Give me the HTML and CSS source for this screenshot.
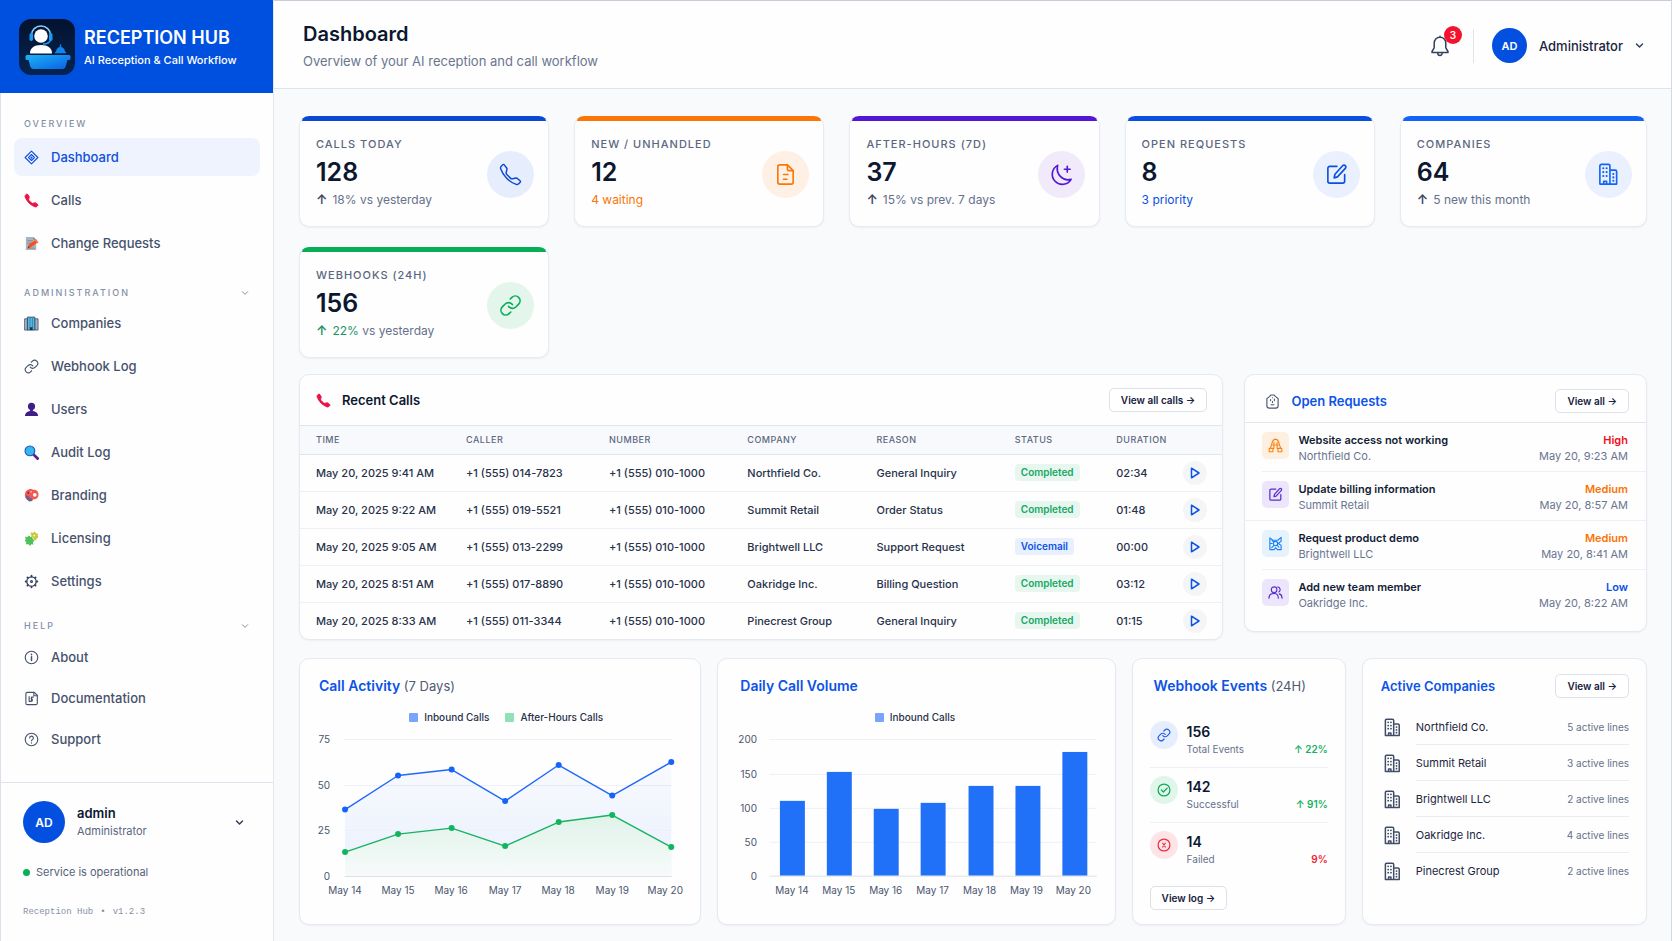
FILE: index.html
```html
<!DOCTYPE html>
<html lang="en">
<head>
    <meta charset="UTF-8">
    <meta name="viewport" content="width=device-width, initial-scale=1.0">
    <title>Reception Hub - Dashboard</title>
    <link rel="stylesheet" href="styles.css">
</head>
<body>
    <!-- shared icons -->
    <svg class="sprite" aria-hidden="true">
        <symbol id="i-phone" viewBox="0 0 16 16">
            <path d="M3.654 1.328a.678.678 0 0 0-1.015-.063L1.605 2.3c-.483.484-.661 1.169-.45 1.77a17.568 17.568 0 0 0 4.168 6.608 17.569 17.569 0 0 0 6.608 4.168c.601.211 1.286.033 1.77-.45l1.034-1.034a.678.678 0 0 0-.063-1.015l-2.307-1.794a.678.678 0 0 0-.58-.122l-2.19.547a1.745 1.745 0 0 1-1.657-.459L5.482 8.062a1.745 1.745 0 0 1-.46-1.657l.548-2.19a.678.678 0 0 0-.122-.58L3.654 1.328z"/>
        </symbol>
        <symbol id="i-link" viewBox="0 0 24 24">
            <path d="M10 13a5 5 0 0 0 7.54.54l3-3a5 5 0 0 0-7.07-7.07l-1.72 1.71"/>
            <path d="M14 11a5 5 0 0 0-7.54-.54l-3 3a5 5 0 0 0 7.07 7.07l1.71-1.71"/>
        </symbol>
        <symbol id="i-edit" viewBox="0 0 24 24">
            <path d="M12.500 3.500H5a2 2 0 0 0-2 2V19a2 2 0 0 0 2 2h13.500a2 2 0 0 0 2-2v-7"/>
            <path d="M18.600 2.600a2 2 0 0 1 2.800 2.800L13 14.500 9.500 15.500l.900-3.700z"/>
        </symbol>
        <symbol id="i-building" viewBox="0 0 24 24">
            <path d="M3 22V3a1.500 1.500 0 0 1 1.500-1.500h7.500A1.500 1.500 0 0 1 13.500 3v19M13.500 7.500h5.500A1.500 1.500 0 0 1 20.500 9v13M3 22h17.500M7 22v-3h3v3"/>
            <path stroke-width="2.200" d="M6.500 5.500h.1M10 5.500h.1M6.500 9.500h.1M10 9.500h.1M6.500 13.500h.1M10 13.500h.1M17 11.500h.1M17 15h.1M17 18.500h.1"/>
        </symbol>
        <symbol id="i-chevron" viewBox="0 0 12 12">
            <path d="M2 4l4 4 4-4"/>
        </symbol>
        <symbol id="i-play" viewBox="0 0 12 12">
            <path d="M2.500 1.200v9.600L10 6z"/>
        </symbol>
    </svg>

    <div class="app">
        <aside class="sidebar">
            <div class="brand">
                <svg class="logo" viewBox="0 0 56 56" aria-hidden="true">
                    <defs>
                        <linearGradient id="desk" x1="0" y1="0" x2="1" y2="1">
                            <stop offset="0" stop-color="#1cb4f4"/>
                            <stop offset="1" stop-color="#0a5fe8"/>
                        </linearGradient>
                        <linearGradient id="logoBg" x1="0" y1="0" x2="0" y2="1">
                            <stop offset="0" stop-color="#03122f"/>
                            <stop offset="1" stop-color="#062450"/>
                        </linearGradient>
                    </defs>
                    <rect width="56" height="56" rx="12" fill="url(#logoBg)"/>
                    <path d="M12.500 16a9.500 9 0 0 1 19 0" fill="none" stroke="#8fd4fa" stroke-width="1.500"/>
                    <path d="M11 34.500c0-5.500 4-8.500 11-8.500s11 3 11 8.500z" fill="#fff"/>
                    <circle cx="22" cy="17" r="6.800" fill="#fff"/>
                    <rect x="10.500" y="14" width="3.500" height="8" rx="1.700" fill="#1a9cf0"/>
                    <rect x="30" y="14" width="3.500" height="8" rx="1.700" fill="#1a9cf0"/>
                    <path d="M31.500 21c-1 3-3.500 4-7 4" fill="none" stroke="#1a9cf0" stroke-width="1.500"/>
                    <path d="M37 33a4.500 5 0 0 1 9 0z" fill="#1284f0"/>
                    <path d="M36.500 33.500h10M41.500 26v2.500" fill="none" stroke="#1284f0" stroke-width="1.400"/>
                    <path d="M8 36h42a1.500 1.500 0 0 1 1.500 1.500v2A1.500 1.500 0 0 1 50 41h-1.500l-2 7a3 3 0 0 1-3 2h-29a3 3 0 0 1-3-2l-2-7H8a1.500 1.500 0 0 1-1.500-1.500v-2A1.500 1.500 0 0 1 8 36z" fill="url(#desk)"/>
                </svg>
                <div>
                    <div class="brand-name">RECEPTION HUB</div>
                    <div class="brand-sub">AI Reception &amp; Call Workflow</div>
                </div>
            </div>

            <nav>
                <div class="nav-label">OVERVIEW</div>
                <ul class="nav-list">
                    <li><a class="nav-item active" href="#">
                        <svg class="icon" viewBox="0 0 16 16"><path d="M8 1.200L14.800 8 8 14.800 1.200 8z"/><path d="M8 4.800L11.200 8 8 11.200 4.800 8z"/><circle cx="8" cy="8" r=".6"/></svg>
                        Dashboard</a></li>
                    <li><a class="nav-item" href="#">
                        <svg class="icon icon-red"><use href="#i-phone"/></svg>
                        Calls</a></li>
                    <li><a class="nav-item" href="#">
                        <svg class="icon icon-flat" viewBox="0 0 16 16"><path d="M2 1h8l3 3v11H2z" fill="#aab3c0"/><path d="M10 1v3h3z" fill="#7d8797"/><path d="M4 5h5M4 7.500h4M4 13h7" stroke="#78818f" stroke-width=".8"/><path d="M4 13l1-4 7-4.500 2.500 2.500L7.500 12z" fill="#f4511e"/><path d="M11 4.500L14 8l1.500-1-2.500-3.500z" fill="#ff7043"/><path d="M4 13l.5-2 1.500 1.500z" fill="#5b3a2a"/></svg>
                        Change Requests</a></li>
                </ul>

                <button class="nav-toggle" type="button">ADMINISTRATION <svg class="chev-sm"><use href="#i-chevron"/></svg></button>
                <ul class="nav-list">
                    <li><a class="nav-item" href="#">
                        <svg class="icon icon-flat" viewBox="0 0 16 16"><path d="M1 3h3v12H1zM12 3h3v12h-3z" fill="#9fb1c7" stroke="#3c4a66" stroke-width=".8"/><path d="M4 1.200h7.500V15H4z" fill="#58b7dc" stroke="#2f4163" stroke-width=".9"/><path d="M6.400 1.500v11M9 1.500v11" stroke="#2c7ea6" stroke-width=".8"/><path d="M6.200 12h3v3h-3z" fill="#1c2e52"/></svg>
                        Companies</a></li>
                    <li><a class="nav-item" href="#">
                        <svg class="icon icon-fine"><use href="#i-link"/></svg>
                        Webhook Log</a></li>
                    <li><a class="nav-item" href="#">
                        <svg class="icon icon-flat" viewBox="0 0 16 16"><circle cx="8" cy="4.700" r="3.800" fill="#3f1f86"/><path d="M6.500 7h3v3h-3z" fill="#3f1f86"/><path d="M1 15c0-3.500 3-5.500 7-5.500s7 2 7 5.500z" fill="#3f1f86"/></svg>
                        Users</a></li>
                    <li><a class="nav-item" href="#">
                        <svg class="icon icon-flat" viewBox="0 0 16 16"><path d="M10 10l4.500 4.500" stroke="#5b1d87" stroke-width="3" stroke-linecap="round"/><circle cx="6.300" cy="6.300" r="5.200" fill="#35b8f1" stroke="#2657b5" stroke-width="1.200"/></svg>
                        Audit Log</a></li>
                    <li><a class="nav-item" href="#">
                        <svg class="icon icon-flat" viewBox="0 0 16 16"><path d="M5 1.500C7 .5 9 1 10 2c3-.5 5.500 1.500 5.500 5S13 12.500 10 12c-1 2.500-4 3-5.500 1C1.500 12 .5 9 1 6c.5-2.500 2-4 4-4.500z" fill="#f5564f"/><circle cx="11.500" cy="7.200" r="2" fill="#fff"/><path d="M2 8l3 .5 1 3 2-1 .5 3-3 .8L3 12z" fill="#53679b"/><circle cx="4.500" cy="5" r="1" fill="#2f3f78"/><circle cx="7.500" cy="4" r=".9" fill="#ffc2ae"/></svg>
                        Branding</a></li>
                    <li><a class="nav-item" href="#">
                        <svg class="icon icon-flat" viewBox="0 0 16 16"><path d="M1 6l3 .500c0-2 2.500-2 2.500 0L9 6.500l.500 2.500c2 0 2 2.500 0 2.500L10 14.500l-2.500-.500c0 2-2.500 2-2.500 0L2 14l.500-2.500C.500 11.500.500 9 2 9z" fill="#4ec35b"/><path d="M8 1.500l2 .500c.500-2 2.500-1.500 2.500.300L15 3l-.500 2c1.500 1 .500 3-1 2.500L13 10l-3-1V6.500L7.500 6 8 4C6.500 3.500 6.500 1.500 8 1.500z" fill="#c2c934"/><circle cx="11" cy="4.800" r="1" fill="#fff8c4"/></svg>
                        Licensing</a></li>
                    <li><a class="nav-item" href="#">
                        <svg class="icon icon-dark" viewBox="0 0 16 16"><circle cx="8" cy="8" r="5"/><circle cx="8" cy="8" r="1"/><path stroke-width="2" d="M8 1.800v.8M8 13.400v.8M1.800 8h.8M13.400 8h.8M3.700 3.700l.5.5M11.800 11.800l.5.5M3.700 12.300l.5-.5M11.800 4.200l.5-.5"/></svg>
                        Settings</a></li>
                </ul>

                <button class="nav-toggle nav-toggle-help" type="button">HELP <svg class="chev-sm"><use href="#i-chevron"/></svg></button>
                <ul class="nav-list nav-list-help">
                    <li><a class="nav-item" href="#">
                        <svg class="icon" viewBox="0 0 16 16"><circle cx="8" cy="8" r="6.700"/><path d="M8 7.300v4M8 4.500v.5" stroke-width="1.600"/></svg>
                        About</a></li>
                    <li><a class="nav-item" href="#">
                        <svg class="icon" viewBox="0 0 16 16"><path d="M3.500 1.500h7.500L14.200 4.500v8.500a1.500 1.500 0 0 1-1.500 1.500H3.500A1.500 1.500 0 0 1 2 13V3a1.500 1.500 0 0 1 1.500-1.500z"/><path d="M10.500 1.700v3.300h3.500M5.500 6v5h2a1.500 1.500 0 0 0 0-3M8 10V6.500h2"/></svg>
                        Documentation</a></li>
                    <li><a class="nav-item" href="#">
                        <svg class="icon" viewBox="0 0 16 16"><circle cx="8" cy="8" r="6.700"/><path d="M6 6.300a2 2 0 1 1 2.800 1.900c-.6.3-.8.600-.8 1.200M8 11.500v.3"/></svg>
                        Support</a></li>
                </ul>
            </nav>

            <div class="sidebar-footer">
                <button class="user-row" type="button">
                    <span class="avatar avatar-lg">AD</span>
                    <span class="user-text">
                        <span class="user-name">admin</span>
                        <span class="user-role">Administrator</span>
                    </span>
                    <svg class="chev"><use href="#i-chevron"/></svg>
                </button>
                <div class="service"><span class="dot"></span>Service is operational</div>
                <div class="version"><span>Reception Hub</span><span>•</span><span>v1.2.3</span></div>
            </div>
        </aside>

        <div class="content">
            <header class="topbar">
                <div class="topbar-title">
                    <h1>Dashboard</h1>
                    <p>Overview of your AI reception and call workflow</p>
                </div>
                <div class="topbar-right">
                    <button class="bell" type="button" aria-label="Notifications">
                        <svg viewBox="0 0 20 22"><path d="M10 2.200v-1M10 2.300c-3.600 0-5.800 2.600-5.800 6v4.500L2 16.500v1h16v-1l-2.200-3.700V8.300c0-3.400-2.200-6-5.800-6z"/><path d="M7.800 18a2.200 2.500 0 0 0 4.400 0"/></svg>
                        <span class="badge">3</span>
                    </button>
                    <button class="account" type="button">
                        <span class="avatar">AD</span>
                        Administrator
                        <svg class="chev"><use href="#i-chevron"/></svg>
                    </button>
                </div>
            </header>

            <main>
                <section class="stats">
                    <div class="stat stat-navy">
                        <div>
                            <div class="stat-label">CALLS TODAY</div>
                            <div class="stat-value">128</div>
                            <div class="stat-note"><b>↑</b>18% vs yesterday</div>
                        </div>
                        <span class="stat-icon"><svg class="i-thin"><use href="#i-phone"/></svg></span>
                    </div>
                    <div class="stat stat-orange">
                        <div>
                            <div class="stat-label">NEW / UNHANDLED</div>
                            <div class="stat-value">12</div>
                            <div class="stat-note stat-note-accent">4 waiting</div>
                        </div>
                        <span class="stat-icon"><svg viewBox="0 0 24 24"><path d="M14 2H6a2 2 0 0 0-2 2v16a2 2 0 0 0 2 2h12a2 2 0 0 0 2-2V8z"/><path d="M14 2v4.500A1.500 1.500 0 0 0 15.500 8H20M10 12h4.500M10 17h3.500"/></svg></span>
                    </div>
                    <div class="stat stat-purple">
                        <div>
                            <div class="stat-label">AFTER-HOURS (7D)</div>
                            <div class="stat-value">37</div>
                            <div class="stat-note"><b>↑</b>15% vs prev. 7 days</div>
                        </div>
                        <span class="stat-icon"><svg viewBox="0 0 24 24"><path d="M8 2.500A10.500 10.500 0 1 0 22 17C14 19.500 5.500 12 8 2.500z"/><path d="M18 3.500v6M15 6.500h6"/></svg></span>
                    </div>
                    <div class="stat stat-blue">
                        <div>
                            <div class="stat-label">OPEN REQUESTS</div>
                            <div class="stat-value">8</div>
                            <div class="stat-note stat-note-accent">3 priority</div>
                        </div>
                        <span class="stat-icon"><svg><use href="#i-edit"/></svg></span>
                    </div>
                    <div class="stat stat-bright">
                        <div>
                            <div class="stat-label">COMPANIES</div>
                            <div class="stat-value">64</div>
                            <div class="stat-note"><b>↑</b>5 new this month</div>
                        </div>
                        <span class="stat-icon"><svg><use href="#i-building"/></svg></span>
                    </div>
                    <div class="stat stat-green">
                        <div>
                            <div class="stat-label">WEBHOOKS (24H)</div>
                            <div class="stat-value">156</div>
                            <div class="stat-note"><b>↑</b><em>22%</em> vs yesterday</div>
                        </div>
                        <span class="stat-icon"><svg><use href="#i-link"/></svg></span>
                    </div>
                </section>

                <section class="middle">
                    <div class="panel">
                        <div class="panel-bar">
                            <svg class="icon icon-red"><use href="#i-phone"/></svg>
                            <h2 class="dark">Recent Calls</h2>
                            <button class="btn" type="button">View all calls →</button>
                        </div>
                        <table>
                            <thead>
                                <tr>
                                    <th class="c-time">TIME</th>
                                    <th class="c-caller">CALLER</th>
                                    <th class="c-number">NUMBER</th>
                                    <th class="c-company">COMPANY</th>
                                    <th class="c-reason">REASON</th>
                                    <th class="c-status">STATUS</th>
                                    <th class="c-duration">DURATION</th>
                                    <th></th>
                                </tr>
                            </thead>
                            <tbody>
                                <tr>
                                    <td>May 20, 2025 9:41 AM</td><td>+1 (555) 014-7823</td><td>+1 (555) 010-1000</td><td>Northfield Co.</td><td>General Inquiry</td>
                                    <td><span class="pill">Completed</span></td><td>02:34</td>
                                    <td><button class="play" type="button" aria-label="Play"><svg><use href="#i-play"/></svg></button></td>
                                </tr>
                                <tr>
                                    <td>May 20, 2025 9:22 AM</td><td>+1 (555) 019-5521</td><td>+1 (555) 010-1000</td><td>Summit Retail</td><td>Order Status</td>
                                    <td><span class="pill">Completed</span></td><td>01:48</td>
                                    <td><button class="play" type="button" aria-label="Play"><svg><use href="#i-play"/></svg></button></td>
                                </tr>
                                <tr>
                                    <td>May 20, 2025 9:05 AM</td><td>+1 (555) 013-2299</td><td>+1 (555) 010-1000</td><td>Brightwell LLC</td><td>Support Request</td>
                                    <td><span class="pill pill-blue">Voicemail</span></td><td>00:00</td>
                                    <td><button class="play" type="button" aria-label="Play"><svg><use href="#i-play"/></svg></button></td>
                                </tr>
                                <tr>
                                    <td>May 20, 2025 8:51 AM</td><td>+1 (555) 017-8890</td><td>+1 (555) 010-1000</td><td>Oakridge Inc.</td><td>Billing Question</td>
                                    <td><span class="pill">Completed</span></td><td>03:12</td>
                                    <td><button class="play" type="button" aria-label="Play"><svg><use href="#i-play"/></svg></button></td>
                                </tr>
                                <tr>
                                    <td>May 20, 2025 8:33 AM</td><td>+1 (555) 011-3344</td><td>+1 (555) 010-1000</td><td>Pinecrest Group</td><td>General Inquiry</td>
                                    <td><span class="pill">Completed</span></td><td>01:15</td>
                                    <td><button class="play" type="button" aria-label="Play"><svg><use href="#i-play"/></svg></button></td>
                                </tr>
                            </tbody>
                        </table>
                    </div>

                    <div class="panel requests">
                        <div class="panel-bar">
                            <svg class="icon" viewBox="0 0 16 16"><path d="M5 2.500L6.500 1h3L11 2.500l3 2.500v7.500a2.500 2.500 0 0 1-2.500 2.500h-7A2.500 2.500 0 0 1 2 12.500V5z"/><path d="M6 6v1M10 5.500v1.500M8 8v1M6.500 11.500h3M8 4h.1"/></svg>
                            <h2 class="small">Open Requests</h2>
                            <button class="btn" type="button">View all →</button>
                        </div>
                        <ul>
                            <li>
                                <span class="tile tile-orange"><svg viewBox="0 0 16 16"><path d="M4 6.500C4.500 3.500 6 1.500 8 1.200c2 .3 3.500 2.300 4 5.300M4 6.500L2.500 11M12 6.500l1.500 4.500M1.300 11h4v3.700h-4zM10.700 11h4v3.700h-4zM6.300 4.500v6.500M9.700 4.500v6.500M5 7.500h6"/></svg></span>
                                <div class="req-text"><strong>Website access not working</strong><span>Northfield Co.</span></div>
                                <div class="req-meta"><strong class="high">High</strong><span>May 20, 9:23 AM</span></div>
                            </li>
                            <li>
                                <span class="tile tile-purple"><svg><use href="#i-edit"/></svg></span>
                                <div class="req-text"><strong>Update billing information</strong><span>Summit Retail</span></div>
                                <div class="req-meta"><strong class="medium">Medium</strong><span>May 20, 8:57 AM</span></div>
                            </li>
                            <li>
                                <span class="tile tile-sky"><svg viewBox="0 0 16 16"><path d="M2 14.500V2l3 2.500h5.500L14 1.500v4M2 14.500h4.500L8 12.500l2 2h4V10M14 5.500l-3 2.500 3 2M2 8h2.500M4.500 5l2 1.500M4 12.500l2.500-2.500M11.500 12l-1.500-2"/><circle cx="8" cy="8" r="2.300"/></svg></span>
                                <div class="req-text"><strong>Request product demo</strong><span>Brightwell LLC</span></div>
                                <div class="req-meta"><strong class="medium">Medium</strong><span>May 20, 8:41 AM</span></div>
                            </li>
                            <li>
                                <span class="tile tile-purple"><svg viewBox="0 0 16 16"><circle cx="6.500" cy="5" r="3"/><path d="M1 14c0-3 2.200-5 5.500-5s4.500 2 4.500 5M10.500 2a3 3 0 0 1 1 5.500M12 9.500c2 .5 3 2 3 4.500"/></svg></span>
                                <div class="req-text"><strong>Add new team member</strong><span>Oakridge Inc.</span></div>
                                <div class="req-meta"><strong class="low">Low</strong><span>May 20, 8:22 AM</span></div>
                            </li>
                        </ul>
                    </div>
                </section>

                <section class="bottom">
                    <div class="panel activity">
                        <div class="panel-title"><h2>Call Activity <span>(7 Days)</span></h2></div>
                        <div class="legend"><i></i>Inbound Calls<i class="green"></i>After-Hours Calls</div>
                        <svg class="chart" viewBox="0 0 362 170">
                            <defs>
                                <linearGradient id="fillBlue" x1="0" y1="0" x2="0" y2="1">
                                    <stop offset="0" stop-color="#2f6df6" stop-opacity=".03"/>
                                    <stop offset="1" stop-color="#2f6df6" stop-opacity=".1"/>
                                </linearGradient>
                                <linearGradient id="fillGreen" x1="0" y1="0" x2="0" y2="1">
                                    <stop offset="0" stop-color="#dff3e8"/>
                                    <stop offset="1" stop-color="#f7fbfb"/>
                                </linearGradient>
                            </defs>
                            <path class="grid" d="M26 11.500H352M26 57.500H352M26 102.500H352"/>
                            <path d="M26 81.500L79 47.500l53.500-6L186 73l53.500-36L293 67.500 352 34v114.500H26z" fill="url(#fillBlue)"/>
                            <path d="M26 124l53-18 53.500-6L186 118l53.500-24L293 87l59 32v29.500H26z" fill="url(#fillGreen)"/>
                            <path class="grid" d="M26 102.500H352"/>
                            <path class="axis" d="M26 148.500H352"/>
                            <path class="line-blue" d="M26 81.500L79 47.500l53.500-6L186 73l53.500-36L293 67.500 352 34"/>
                            <path class="line-green" d="M26 124l53-18 53.500-6L186 118l53.500-24L293 87l59 32"/>
                            <g class="dots-blue"><circle cx="26" cy="81.500" r="3"/><circle cx="79" cy="47.500" r="3"/><circle cx="132.500" cy="41.500" r="3"/><circle cx="186" cy="73" r="3"/><circle cx="239.500" cy="37" r="3"/><circle cx="293" cy="67.500" r="3"/><circle cx="352" cy="34" r="3"/></g>
                            <g class="dots-green"><circle cx="26" cy="124" r="3"/><circle cx="79" cy="106" r="3"/><circle cx="132.500" cy="100" r="3"/><circle cx="186" cy="118" r="3"/><circle cx="239.500" cy="94" r="3"/><circle cx="293" cy="87" r="3"/><circle cx="352" cy="119" r="3"/></g>
                            <g class="y-labels"><text x="11" y="15">75</text><text x="11" y="61">50</text><text x="11" y="106">25</text><text x="11" y="152">0</text></g>
                            <g class="x-labels"><text x="26" y="166">May 14</text><text x="79" y="166">May 15</text><text x="132" y="166">May 16</text><text x="186" y="166">May 17</text><text x="239" y="166">May 18</text><text x="293" y="166">May 19</text><text x="346" y="166">May 20</text></g>
                        </svg>
                    </div>

                    <div class="panel volume">
                        <div class="panel-title"><h2>Daily Call Volume</h2></div>
                        <div class="legend"><i></i>Inbound Calls</div>
                        <svg class="chart" viewBox="0 0 358 168">
                            <path class="grid" d="M30 11.500H357M30 46.500H357M30 80.500H357M30 114.500H357"/>
                            <g class="bars"><rect x="40" y="73" width="25" height="75"/><rect x="87" y="44" width="25" height="104"/><rect x="134" y="81" width="25" height="67"/><rect x="181" y="75" width="25" height="73"/><rect x="229" y="58" width="25" height="90"/><rect x="276" y="58" width="25" height="90"/><rect x="323" y="24" width="25" height="124"/></g>
                            <path class="axis" d="M30 148.500H357"/>
                            <g class="y-labels"><text x="17" y="15">200</text><text x="17" y="50">150</text><text x="17" y="84">100</text><text x="17" y="118">50</text><text x="17" y="152">0</text></g>
                            <g class="x-labels"><text x="52" y="166">May 14</text><text x="99" y="166">May 15</text><text x="146" y="166">May 16</text><text x="193" y="166">May 17</text><text x="240" y="166">May 18</text><text x="287" y="166">May 19</text><text x="334" y="166">May 20</text></g>
                        </svg>
                    </div>

                    <div class="panel events">
                        <div class="panel-title"><h2>Webhook Events <span>(24H)</span></h2></div>
                        <ul>
                            <li>
                                <span class="round round-blue"><svg><use href="#i-link"/></svg></span>
                                <div><strong>156</strong><span>Total Events</span></div>
                                <em>↑ 22%</em>
                            </li>
                            <li>
                                <span class="round round-green"><svg viewBox="0 0 16 16"><circle cx="8" cy="8" r="6.800"/><path d="M5 8l2.300 2.300L11.500 6"/></svg></span>
                                <div><strong>142</strong><span>Successful</span></div>
                                <em>↑ 91%</em>
                            </li>
                            <li>
                                <span class="round round-red"><svg viewBox="0 0 16 16"><circle cx="8" cy="8" r="6.800"/><path d="M6.500 6l3 4.300M9.500 6l-3 4.300"/></svg></span>
                                <div><strong>14</strong><span>Failed</span></div>
                                <em class="down">9%</em>
                            </li>
                        </ul>
                        <button class="btn" type="button">View log →</button>
                    </div>

                    <div class="panel companies">
                        <div class="panel-title"><h2 class="small">Active Companies</h2><button class="btn" type="button">View all →</button></div>
                        <ul>
                            <li><svg><use href="#i-building"/></svg><div><span>Northfield Co.</span><small>5 active lines</small></div></li>
                            <li><svg><use href="#i-building"/></svg><div><span>Summit Retail</span><small>3 active lines</small></div></li>
                            <li><svg><use href="#i-building"/></svg><div><span>Brightwell LLC</span><small>2 active lines</small></div></li>
                            <li><svg><use href="#i-building"/></svg><div><span>Oakridge Inc.</span><small>4 active lines</small></div></li>
                            <li><svg><use href="#i-building"/></svg><div><span>Pinecrest Group</span><small>2 active lines</small></div></li>
                        </ul>
                    </div>
                </section>
            </main>
        </div>
    </div>
</body>
</html>
```
FILE: styles.css
```css
* {
    box-sizing: border-box;
}
body {
    margin: 0;
    font-family: Inter, "Liberation Sans", sans-serif;
    font-size: 11px;
    color: #1b2540;
    background-color: #f9fafc;
}
h1, h2, p, ul {
    margin: 0;
    padding: 0;
}
ul {
    list-style: none;
}
button {
    font-family: inherit;
    color: inherit;
    background: none;
    border: none;
    padding: 0;
    cursor: pointer;
}
em {
    font-style: normal;
}
svg {
    fill: none;
    stroke: currentColor;
    stroke-width: 2;
    stroke-linecap: round;
    stroke-linejoin: round;
    flex-shrink: 0;
}
.sprite {
    display: none;
}
.app {
    display: grid;
    grid-template-columns: 274px 1fr;
    min-height: 100vh;
}

/* sidebar */
.sidebar {
    display: flex;
    flex-direction: column;
    background-color: #fefefe;
    border-right: 1px solid #e3e7ef;
    border-bottom: 1px solid #cfd4de;
    box-shadow: inset 1px 0 #dbe1eb;
}
.brand {
    display: flex;
    align-items: center;
    gap: 9px;
    padding: 19px 18px 18px 19px;
    background-color: #0050e0;
    color: white;
}
.logo {
    width: 56px;
    height: 56px;
    stroke: none;
}
.brand-name {
    padding-top: 2px;
    font-size: 18px;
    line-height: 24px;
    font-weight: 600;
}
.brand-sub {
    font-size: 11px;
    line-height: 20px;
    font-weight: 500;
}
.nav-label, .nav-toggle {
    font-size: 9px;
    line-height: 14px;
    font-weight: 500;
    letter-spacing: 2px;
    color: #8490a8;
}
.nav-label {
    padding: 24px 24px 7px;
}
.nav-toggle {
    display: flex;
    justify-content: space-between;
    align-items: center;
    width: 100%;
    padding: 24px 24px 4px;
}
.nav-toggle-help {
    padding: 19px 24px 5px;
}
.chev-sm {
    width: 8px;
    height: 8px;
    stroke-width: 1.5;
}
.chev {
    width: 9px;
    height: 9px;
    color: #33405e;
}
.nav-list {
    display: flex;
    flex-direction: column;
    gap: 5px;
    padding: 0 13px 0 14px;
}
.nav-item {
    display: flex;
    align-items: center;
    gap: 12px;
    height: 38px;
    padding: 0 10px;
    border-radius: 8px;
    font-size: 13px;
    font-weight: 500;
    color: #46526c;
    text-decoration: none;
}
.nav-item.active {
    background-color: #eef3fe;
    color: #0f4fe0;
}
.nav-list-help {
    gap: 3px;
}
.icon {
    width: 15px;
    height: 15px;
    stroke-width: 1.2;
}
.icon-fine {
    stroke-width: 1.8;
}
.icon-red {
    fill: #ea1347;
    stroke: #ea1347;
    stroke-width: 1;
}
.icon-flat {
    stroke: none;
}
.icon-dark {
    color: #33405e;
}
.sidebar-footer {
    margin-top: auto;
    padding: 18px 29px 23px 23px;
    border-top: 1px solid #dfe3ec;
}
.user-row {
    display: flex;
    align-items: center;
    gap: 12px;
    width: 100%;
    text-align: left;
}
.avatar {
    display: flex;
    align-items: center;
    justify-content: center;
    width: 35px;
    height: 35px;
    border-radius: 50%;
    background-color: #0350e0;
    color: white;
    font-size: 11px;
    font-weight: 600;
}
.avatar-lg {
    width: 42px;
    height: 42px;
    font-size: 12px;
}
.user-text {
    display: flex;
    flex-direction: column;
    flex: 1;
}
.user-name {
    font-size: 13px;
    line-height: 18px;
    font-weight: 600;
    color: #0c1730;
}
.user-role {
    font-size: 11px;
    line-height: 18px;
    color: #5c6780;
}
.service {
    display: flex;
    align-items: center;
    gap: 6px;
    margin-top: 21px;
    font-size: 11px;
    line-height: 16px;
    color: #56617b;
}
.dot {
    width: 7px;
    height: 7px;
    border-radius: 50%;
    background-color: #08b058;
}
.version {
    display: flex;
    gap: 7px;
    margin-top: 26px;
    font-family: "Liberation Mono", monospace;
    font-size: 9px;
    line-height: 12px;
    color: #8792a8;
}

/* top bar */
.content {
    min-width: 0;
    border-top: 1px solid #c6ccd8;
    border-right: 1px solid #d3d8e1;
    border-bottom: 1px solid #cfd4de;
}
.topbar {
    display: flex;
    justify-content: space-between;
    align-items: center;
    height: 88px;
    padding: 2px 27px 0 29px;
    background-color: #fefefe;
    border-bottom: 1px solid #dfe3ea;
}
.topbar-title {
    padding-top: 2px;
}
.topbar h1 {
    font-size: 20px;
    line-height: 28px;
    font-weight: 600;
    color: #0c1730;
}
.topbar p {
    font-size: 13px;
    line-height: 26px;
    color: #6a7590;
}
.topbar-right {
    display: flex;
    align-items: center;
}
.bell {
    position: relative;
    display: flex;
    padding-right: 23px;
    margin-right: 18px;
    border-right: 1px solid #dfe3ec;
    height: 34px;
    align-items: center;
    color: #33405e;
}
.bell svg {
    width: 20px;
    height: 22px;
    stroke-width: 1.5;
}
.badge {
    position: absolute;
    top: -3px;
    right: 11px;
    width: 18px;
    height: 18px;
    border-radius: 50%;
    background-color: #f5122e;
    color: white;
    font-size: 10px;
    line-height: 18px;
    font-weight: 600;
}
.account {
    display: flex;
    align-items: center;
    gap: 12px;
    font-size: 13px;
    font-weight: 500;
    color: #1b2540;
}

/* stat cards */
main {
    padding: 27px 24px 16px 25px;
}
.stats {
    display: grid;
    grid-template-columns: repeat(4, 250fr) 247fr;
    gap: 20px 25px;
}
.stat {
    --accent: #0a48d4;
    --tint: #e6edfd;
    display: flex;
    justify-content: space-between;
    align-items: center;
    padding: 19px 14px 18px 16px;
    border: 1px solid #e8ebf1;
    border-top-color: transparent;
    border-radius: 10px;
    background: linear-gradient(var(--accent), var(--accent)) top / 100% 5px no-repeat border-box, #fefefe;
    box-shadow: 0 1px 2px rgba(30, 45, 80, 0.06);
}
.stat-orange { --accent: #fb7607; --tint: #fef0e4; }
.stat-purple { --accent: #5216d4; --tint: #f0eafb; }
.stat-blue { --accent: #0a50e0; --tint: #eaf0fe; }
.stat-bright { --accent: #1064f8; --tint: #eaf0fe; }
.stat-green { --accent: #08ad58; --tint: #e4f6ec; }
.stat-label {
    font-size: 11px;
    line-height: 16px;
    font-weight: 500;
    letter-spacing: 1px;
    color: #5c6780;
}
.stat-value {
    margin: 6px 0;
    font-size: 25px;
    line-height: 28px;
    font-weight: 600;
    color: #0c1730;
}
.stat-note {
    font-size: 12px;
    line-height: 16px;
    color: #66718b;
}
.stat-note b {
    margin-right: 5px;
    font-size: 13px;
    line-height: 1;
    font-weight: 600;
    color: #3a465f;
}
.stat-note-accent {
    color: var(--accent);
}
.stat-green .stat-note b, .stat-green em {
    color: #1b9464;
}
.stat-icon {
    display: flex;
    align-items: center;
    justify-content: center;
    width: 47px;
    height: 47px;
    margin-top: 4px;
    border-radius: 50%;
    background-color: var(--tint);
    color: var(--accent);
}
.stat-icon svg {
    width: 23px;
    height: 23px;
    stroke-width: 1.7;
}
.stat-icon .i-thin {
    stroke-width: 1;
}

/* panels */
.panel {
    border: 1px solid #e6e9f0;
    border-radius: 10px;
    background-color: #fefefe;
    box-shadow: 0 1px 2px rgba(30, 45, 80, 0.05);
}
h2 {
    font-size: 14px;
    line-height: 20px;
    font-weight: 600;
    color: #0c53e6;
}
h2.small {
    font-size: 13px;
}
h2.dark {
    font-size: 13px;
    color: #0c1730;
}
h2 span {
    font-size: 13px;
    font-weight: 400;
    color: #4f5a74;
}
.btn {
    height: 24px;
    padding: 0 11px;
    border: 1px solid #dce1ea;
    border-radius: 5px;
    background-color: #fff;
    font-size: 10px;
    font-weight: 600;
    color: #16213c;
}
.middle {
    display: grid;
    grid-template-columns: 923fr 402fr;
    gap: 21px;
    align-items: start;
    margin-top: 16px;
}
.panel-bar {
    display: flex;
    align-items: center;
    gap: 11px;
    padding: 13px 15px 13px 16px;
    border-bottom: 1px solid #e1e5ed;
    color: #4a556e;
}
.panel-bar .btn {
    margin-left: auto;
}
table {
    width: 100%;
    table-layout: fixed;
    border-collapse: collapse;
}
th, td {
    padding: 0;
    text-align: left;
    border-bottom: 1px solid #edf0f5;
}
th {
    height: 28px;
    font-size: 9px;
    font-weight: 500;
    letter-spacing: 0.5px;
    color: #5c6780;
    background-color: #f8f9fc;
    border-bottom-color: #e1e5ed;
}
td {
    height: 37px;
    font-weight: 500;
    color: #28324b;
}
th:first-child, td:first-child {
    padding-left: 16px;
}
tbody tr:last-child td {
    border-bottom: none;
}
.c-time { width: 18%; }
.c-caller { width: 15.5%; }
.c-number { width: 15%; }
.c-company { width: 14%; }
.c-reason { width: 15%; }
.c-status { width: 11%; }
.c-duration { width: 7.2%; }
.pill {
    display: inline-block;
    padding: 0 6px;
    border-radius: 4px;
    background-color: #e7f7ef;
    color: #16a765;
    font-size: 10px;
    line-height: 17px;
    font-weight: 600;
}
.pill-blue {
    background-color: #e8effe;
    color: #0c53e6;
}
.play {
    display: flex;
    align-items: center;
    justify-content: center;
    width: 24px;
    height: 24px;
    border-radius: 50%;
    background-color: #f4f5f7;
    color: #0c53e6;
}
.play svg {
    width: 12px;
    height: 12px;
    stroke-width: 1.5;
}

/* open requests */
.requests {
    padding-bottom: 13px;
}
.requests .panel-bar {
    padding: 14px 17px 9px 20px;
}
.requests li {
    display: flex;
    align-items: flex-start;
    gap: 9px;
    margin-left: 17px;
    padding: 9px 18px 7px 0;
    border-bottom: 1px solid #edf0f5;
}
.requests li:nth-child(2) {
    margin-left: 0;
    padding-left: 17px;
}
.requests li:last-child {
    border-bottom: none;
}
.requests strong, .requests div > span {
    display: block;
    font-size: 11px;
    line-height: 16px;
}
.requests strong {
    font-weight: 600;
    color: #121c36;
}
.requests div > span {
    color: #6a7590;
}
.req-meta {
    margin-left: auto;
    text-align: right;
}
.requests .high { color: #f20d1d; }
.requests .medium { color: #f97406; }
.requests .low { color: #0c53e6; }
.tile {
    display: flex;
    align-items: center;
    justify-content: center;
    width: 27px;
    height: 27px;
    border-radius: 5px;
}
.tile svg {
    width: 15px;
    height: 15px;
    stroke-width: 1.2;
}
.tile-orange { background-color: #fef0e1; color: #f98416; }
.tile-purple { background-color: #ece6fc; color: #5a2bd0; }
.tile-purple use { stroke-width: 2; }
.tile-sky { background-color: #e6f2fe; color: #1b83f0; }

/* bottom row */
.bottom {
    display: grid;
    grid-template-columns: 402fr 398fr 214fr 285fr;
    gap: 16px;
    margin-top: 18px;
}
.bottom .panel {
    padding: 15px 17px 14px;
}
.bottom .activity {
    padding-left: 19px;
    padding-right: 19px;
}
.bottom .volume {
    padding-left: 22px;
}
.panel-title {
    display: flex;
    justify-content: space-between;
    align-items: center;
    height: 24px;
}
.legend {
    display: flex;
    align-items: center;
    justify-content: center;
    gap: 6px;
    margin-top: 12px;
    padding-left: 12px;
    font-size: 10px;
    line-height: 14px;
    font-weight: 500;
    color: #28324b;
}
.volume .legend {
    padding: 0 8px 0 0;
}
.legend i {
    width: 9px;
    height: 9px;
    border-radius: 1px;
    background-color: #78a5fb;
}
.legend i.green {
    margin-left: 10px;
    background-color: #93dfb8;
}
.chart {
    display: block;
    width: 100%;
    margin-top: 4px;
    overflow: visible;
}
.chart text {
    stroke: none;
    fill: #4a556e;
    font-size: 10px;
}
.y-labels { text-anchor: end; }
.x-labels { text-anchor: middle; }
.chart path { stroke: none; }
.chart .grid { stroke: #edf0f6; stroke-width: 1; }
.chart .axis { stroke: #dde1e9; stroke-width: 1; }
.chart .line-blue { stroke: #2068f8; stroke-width: 1.4; }
.chart .line-green { stroke: #18b262; stroke-width: 1.4; }
.dots-blue { fill: #1564fa; stroke: none; }
.dots-green { fill: #12b55f; stroke: none; }
.bars { fill: #2170f8; stroke: none; }

.events h2 {
    padding-left: 4px;
}
.events ul {
    margin: 15px 0 9px;
}
.events li {
    display: flex;
    align-items: flex-start;
    gap: 9px;
    padding: 8px 0 10px;
    border-bottom: 1px solid #edf0f5;
}
.events li:last-child {
    border-bottom: none;
}
.events li div {
    display: flex;
    flex-direction: column;
    padding-top: 2px;
}
.events strong {
    font-size: 14px;
    line-height: 18px;
    font-weight: 600;
    color: #0c1730;
}
.events div > span {
    font-size: 10px;
    line-height: 16px;
    color: #66718b;
}
.events em {
    margin-left: auto;
    align-self: flex-end;
    font-size: 10px;
    line-height: 16px;
    font-weight: 600;
    color: #16b05f;
}
.events .down {
    color: #f0202f;
}
.round {
    display: flex;
    align-items: center;
    justify-content: center;
    width: 28px;
    height: 28px;
    border-radius: 50%;
}
.round svg {
    width: 14px;
    height: 14px;
    stroke-width: 1.4;
}
.round-blue { background-color: #e6eefe; color: #1c5cf0; }
.round-blue use { stroke-width: 2; }
.round-green { background-color: #e0f6ea; color: #14a75c; }
.round-red { background-color: #fde5e7; color: #ee2c40; }

.companies .panel-title {
    padding-left: 1px;
}
.companies ul {
    margin-top: 11px;
}
.companies li {
    display: flex;
    align-items: center;
    gap: 14px;
    padding-left: 3px;
}
.companies li svg {
    width: 19px;
    height: 19px;
    stroke-width: 1.9;
    color: #414d68;
}
.companies li div {
    display: flex;
    justify-content: space-between;
    align-items: center;
    flex: 1;
    height: 36px;
    border-bottom: 1px solid #e9ecf2;
    color: #1b2540;
}
.companies li:last-child div {
    border-bottom: none;
}
.companies small {
    font-size: 10px;
    color: #66718b;
}
```
